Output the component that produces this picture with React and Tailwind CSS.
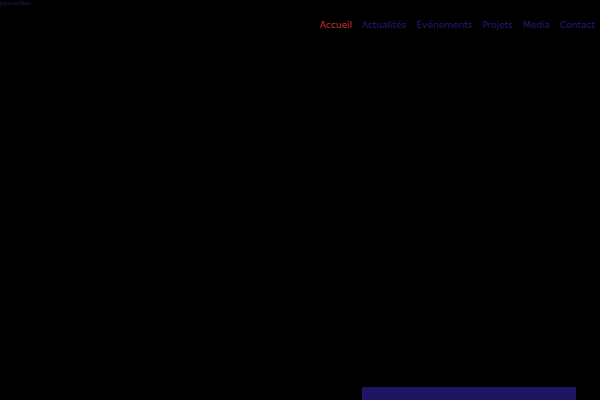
const links = [
  { text: 'Accueil', active: true },
  { text: 'Actualités' },
  { text: 'Événements' },
  { text: 'Projets' },
  { text: 'Media' },
  { text: 'Contact' },
]

export default function App() {
  return (
    <div className="h-[400px] w-[600px] overflow-hidden bg-black font-['DejaVu_Sans',sans-serif]">
      <header className="flex justify-between">
        <div className="text-[5px] leading-[7px] text-[#2a1f66]">JoyeuseTape</div>
        <nav className="mt-[19px] flex pr-[5px] text-[9px] leading-[13px]">
          {links.map((link) => (
            <a
              key={link.text}
              href="#"
              className={`ml-[10px] ${link.active ? 'text-[#c8352b]' : 'text-[#231c75]'}`}
            >
              {link.text}
            </a>
          ))}
        </nav>
      </header>
      <main className="flex justify-end pr-[24px] pt-[355px]">
        <div className="h-[20px] w-[214px] bg-[#1c1665]"></div>
      </main>
    </div>
  )
}
